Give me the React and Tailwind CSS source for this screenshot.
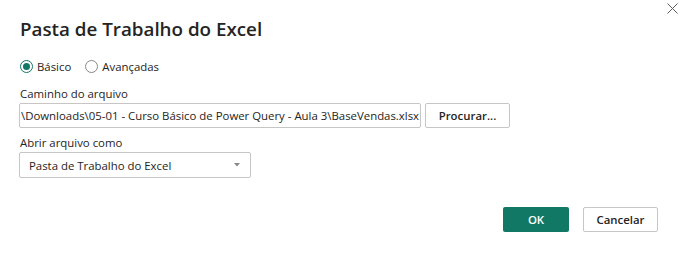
import React from 'react';

const font = { fontFamily: '"Open Sans", "Noto Sans", sans-serif' };

function Radio({ checked, label }) {
  return (
    <label className="flex items-center gap-[4px] text-[11.4px] text-[#252423]">
      <span
        className={
          'flex h-[13px] w-[13px] items-center justify-center rounded-full border ' +
          (checked ? 'border-[#117865]' : 'border-[#8a8886]')
        }
      >
        {checked && <span className="h-[7px] w-[7px] rounded-full bg-[#117865]" />}
      </span>
      {label}
    </label>
  );
}

function App() {
  return (
    <div className="relative h-[255px] w-[683px] overflow-hidden bg-white text-[#252423]" style={font}>
      <button className="absolute right-[5px] top-[2px] flex h-[12px] w-[12px] items-center justify-center" type="button">
        <svg width="11" height="11" viewBox="0 0 11 11" stroke="#605e5c" strokeWidth="1">
          <path d="M0.5 0.5L10.5 10.5M10.5 0.5L0.5 10.5" />
        </svg>
      </button>

      <div className="flex flex-col px-[20px] pt-[15px]">
        <h1 className="text-[18.8px] font-semibold leading-[28px] text-[#252423]">Pasta de Trabalho do Excel</h1>

        <div className="mt-[15px] flex items-center gap-[14px]">
          <Radio checked label="Básico" />
          <Radio label="Avançadas" />
        </div>

        <div className="mt-[11px] text-[11.4px] leading-[16px]">Caminho do arquivo</div>
        <div className="mt-[1px] flex gap-[4px]">
          <div className="ml-[-1px] flex h-[25px] w-[402px] items-center overflow-hidden rounded-[2px] border border-[#c8c6c4] pl-[1px]">
            <span className="whitespace-nowrap text-[11.4px]">
              \Downloads\05-01 - Curso Básico de Power Query - Aula 3\BaseVendas.xlsx
            </span>
          </div>
          <button
            className="h-[25px] w-[85px] rounded-[2px] border border-[#c8c6c4] text-[11.4px] font-semibold"
            type="button"
          >
            Procurar...
          </button>
        </div>

        <div className="mt-[7px] text-[11.4px] leading-[16px]">Abrir arquivo como</div>
        <div className="ml-[-1px] mt-[1px] flex h-[26px] w-[232px] items-center justify-between rounded-[2px] border border-[#c8c6c4] pl-[9px] pr-[10px] text-[11.4px]">
          <span>Pasta de Trabalho do Excel</span>
          <svg width="6" height="4" viewBox="0 0 6 4" fill="#8a8886">
            <path d="M0 0H6L3 3.5Z" />
          </svg>
        </div>

        <div className="mt-[29px] flex justify-end gap-[14px] pr-[5px]">
          <button
            className="h-[25px] w-[66px] rounded-[2px] bg-[#117865] text-[11.4px] font-semibold text-white"
            type="button"
          >
            OK
          </button>
          <button
            className="h-[25px] w-[75px] rounded-[2px] border border-[#c8c6c4] text-[11.4px] font-semibold text-[#252423]"
            type="button"
          >
            Cancelar
          </button>
        </div>
      </div>
    </div>
  );
}

export default App;
